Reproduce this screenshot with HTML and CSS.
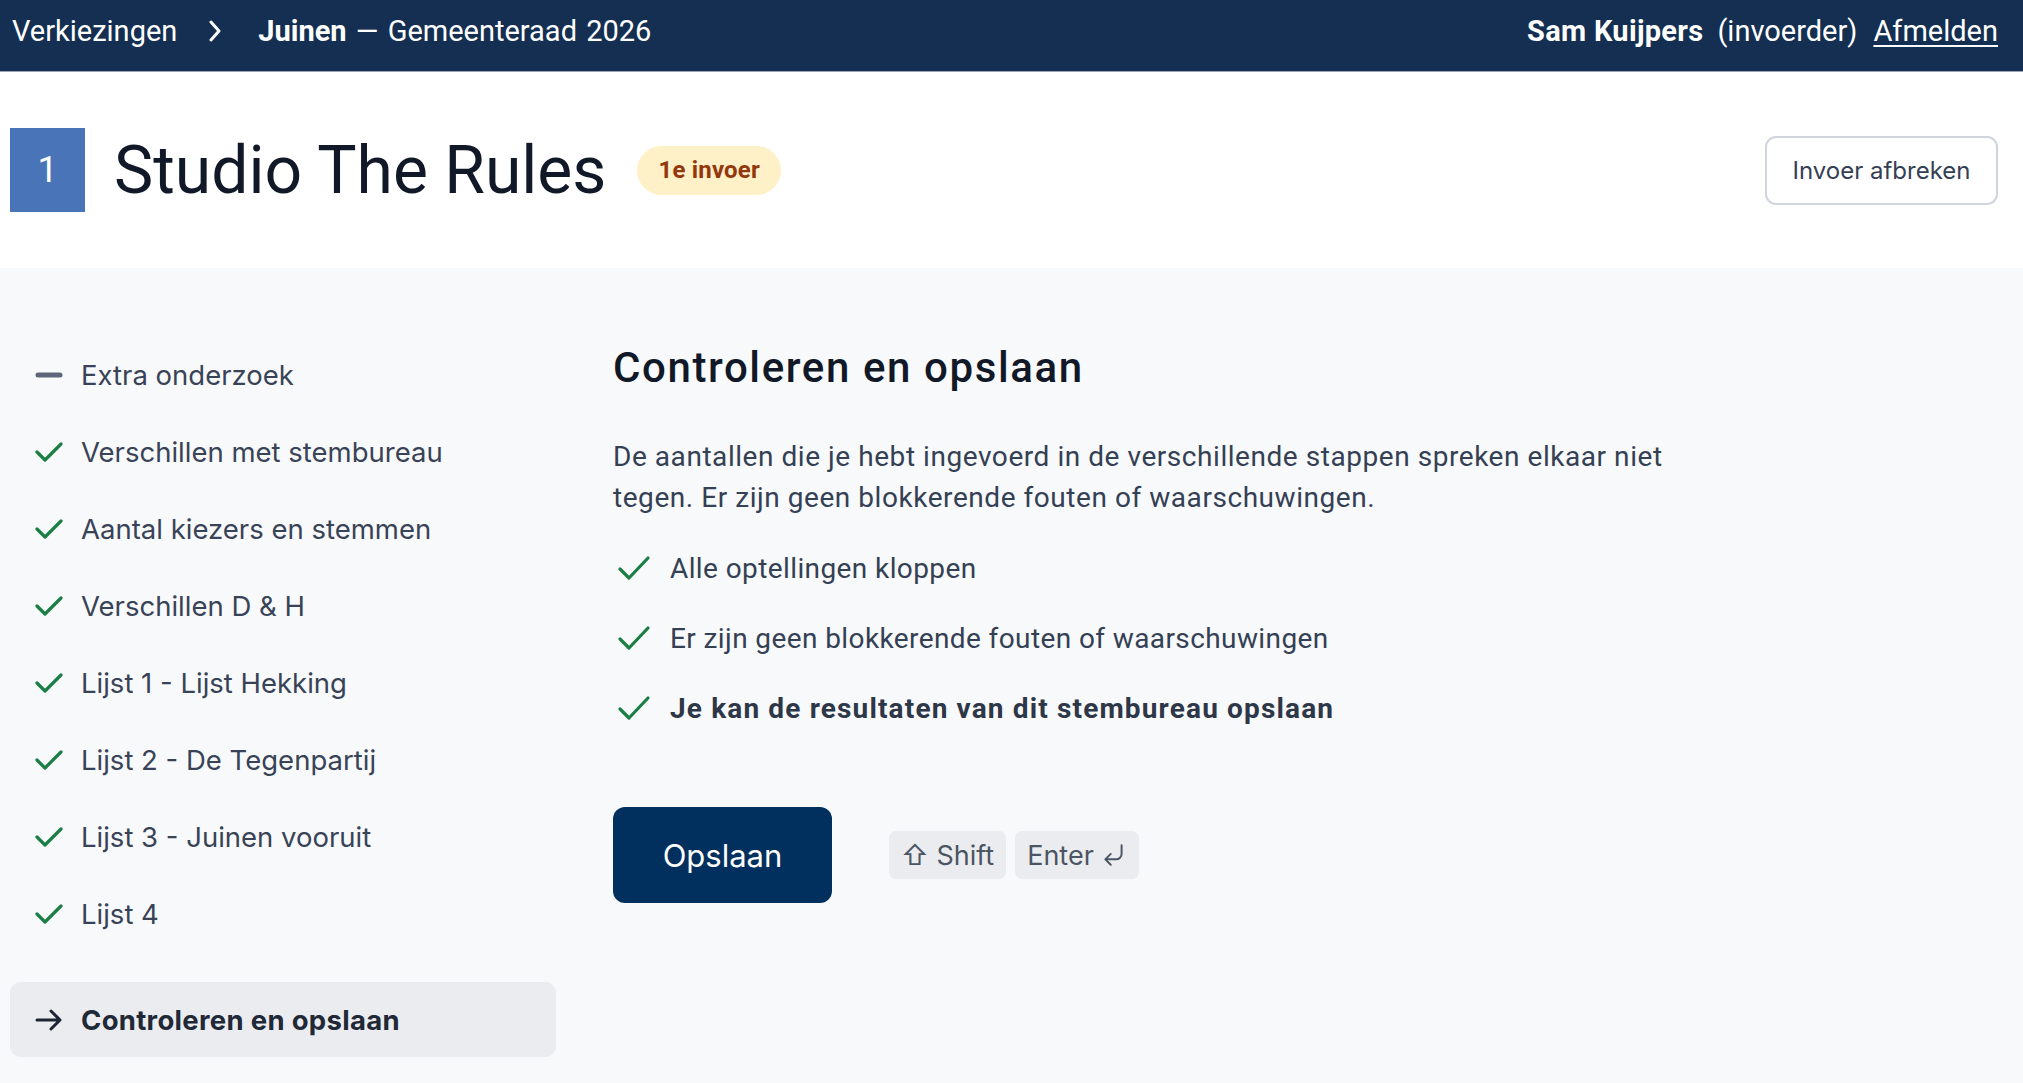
FILE: index.html
```html
<!DOCTYPE html>
<html lang="nl">
<head>
<meta charset="utf-8">
<title>Controleren en opslaan</title>
<link rel="stylesheet" href="styles.css">
</head>
<body>
<header class="topbar">
  <nav class="crumbs">
    <span class="crumb">Verkiezingen</span>
    <svg class="chev" viewBox="0 0 14 22" width="14" height="22"><path d="M3 2 L11 11 L3 20" fill="none" stroke="#fff" stroke-width="3" stroke-linecap="round" stroke-linejoin="round"/></svg>
    <span class="crumb"><strong>Juinen</strong> — Gemeenteraad 2026</span>
  </nav>
  <div class="user">
    <strong>Sam Kuijpers</strong>
    <span class="role">(invoerder)</span>
    <a class="logout" href="#">Afmelden</a>
  </div>
</header>

<section class="pagehead">
  <div class="titlewrap">
    <div class="num">1</div>
    <h1 class="title">Studio The Rules</h1>
    <span class="badge">1e invoer</span>
  </div>
  <button class="btn-outline">Invoer afbreken</button>
</section>

<main class="content">
  <aside class="sidebar">
    <ul class="steps">
      <li class="step"><span class="ico"><svg viewBox="0 0 28 28" width="28" height="28"><path d="M3 14 H25" stroke="#5d667a" stroke-width="5" stroke-linecap="round"/></svg></span>Extra onderzoek</li>
      <li class="step"><span class="ico"><svg viewBox="0 0 28 28" width="28" height="28"><path d="M2 14 L10 22 L26 6" fill="none" stroke="#1b7f45" stroke-width="3.2" stroke-linecap="round" stroke-linejoin="round"/></svg></span>Verschillen met stembureau</li>
      <li class="step"><span class="ico"><svg viewBox="0 0 28 28" width="28" height="28"><path d="M2 14 L10 22 L26 6" fill="none" stroke="#1b7f45" stroke-width="3.2" stroke-linecap="round" stroke-linejoin="round"/></svg></span>Aantal kiezers en stemmen</li>
      <li class="step"><span class="ico"><svg viewBox="0 0 28 28" width="28" height="28"><path d="M2 14 L10 22 L26 6" fill="none" stroke="#1b7f45" stroke-width="3.2" stroke-linecap="round" stroke-linejoin="round"/></svg></span>Verschillen D &amp; H</li>
      <li class="step"><span class="ico"><svg viewBox="0 0 28 28" width="28" height="28"><path d="M2 14 L10 22 L26 6" fill="none" stroke="#1b7f45" stroke-width="3.2" stroke-linecap="round" stroke-linejoin="round"/></svg></span>Lijst 1 - Lijst Hekking</li>
      <li class="step"><span class="ico"><svg viewBox="0 0 28 28" width="28" height="28"><path d="M2 14 L10 22 L26 6" fill="none" stroke="#1b7f45" stroke-width="3.2" stroke-linecap="round" stroke-linejoin="round"/></svg></span>Lijst 2 - De Tegenpartij</li>
      <li class="step"><span class="ico"><svg viewBox="0 0 28 28" width="28" height="28"><path d="M2 14 L10 22 L26 6" fill="none" stroke="#1b7f45" stroke-width="3.2" stroke-linecap="round" stroke-linejoin="round"/></svg></span>Lijst 3 - Juinen vooruit</li>
      <li class="step"><span class="ico"><svg viewBox="0 0 28 28" width="28" height="28"><path d="M2 14 L10 22 L26 6" fill="none" stroke="#1b7f45" stroke-width="3.2" stroke-linecap="round" stroke-linejoin="round"/></svg></span>Lijst 4</li>
    </ul>
    <div class="step active"><span class="ico"><svg viewBox="0 0 28 28" width="28" height="28"><path d="M2 14 H25 M16 5 L25 14 L16 23" fill="none" stroke="#1d2433" stroke-width="3" stroke-linecap="round" stroke-linejoin="round"/></svg></span>Controleren en opslaan</div>
  </aside>

  <article class="main">
    <h2 class="heading">Controleren en opslaan</h2>
    <p class="lead">De aantallen die je hebt ingevoerd in de verschillende stappen spreken elkaar niet tegen. Er zijn geen blokkerende fouten of waarschuwingen.</p>
    <ul class="checks">
      <li class="check"><svg viewBox="0 0 34 28" width="34" height="28"><path d="M3 15 L12 24 L31 4" fill="none" stroke="#1b7f45" stroke-width="3.2" stroke-linecap="round" stroke-linejoin="round"/></svg>Alle optellingen kloppen</li>
      <li class="check"><svg viewBox="0 0 34 28" width="34" height="28"><path d="M3 15 L12 24 L31 4" fill="none" stroke="#1b7f45" stroke-width="3.2" stroke-linecap="round" stroke-linejoin="round"/></svg>Er zijn geen blokkerende fouten of waarschuwingen</li>
      <li class="check strong"><svg viewBox="0 0 34 28" width="34" height="28"><path d="M3 15 L12 24 L31 4" fill="none" stroke="#1b7f45" stroke-width="3.2" stroke-linecap="round" stroke-linejoin="round"/></svg>Je kan de resultaten van dit stembureau opslaan</li>
    </ul>
    <div class="actions">
      <button class="btn-primary">Opslaan</button>
      <div class="keys">
        <kbd class="key">⇧ Shift</kbd>
        <kbd class="key">Enter<svg class="enter" viewBox="0 0 24 24" width="26" height="26"><path d="M19 3 V11 A5 5 0 0 1 14 16 H4 M9 11 L4 16 L9 21" fill="none" stroke="#4b5563" stroke-width="1.8" stroke-linecap="round" stroke-linejoin="round"/></svg></kbd>
      </div>
    </div>
  </article>
</main>
</body>
</html>
```

FILE: styles.css
```css
* { box-sizing: border-box; }
html, body { margin: 0; padding: 0; }
body {
  background: #f8f9fb;
  font-family: Roboto, "Liberation Sans", sans-serif;
  color: #344054;
  min-height: 1083px;
}
ul { list-style: none; margin: 0; padding: 0; }

.topbar {
  height: 72px;
  background: #142f51;
  color: #fff;
  display: flex;
  align-items: center;
  justify-content: space-between;
  padding: 0 25px 10px 12px;
  font-size: 29px;
  border-bottom: 1px solid #9aa6b8;
}
.crumbs { display: flex; align-items: center; }
.crumb { word-spacing: 2px; }
.chev { margin: 0 36px 0 31px; }
.crumb strong { font-weight: 700; }
.user { display: flex; align-items: center; gap: 14px; }
.user strong { font-weight: 700; letter-spacing: 0.3px; }
.logout { color: #fff; text-decoration: underline; text-underline-offset: 4px; text-decoration-thickness: 2px; margin-left: 2px; }

.pagehead {
  height: 196px;
  background: #fff;
  display: flex;
  align-items: center;
  justify-content: space-between;
  padding: 0 25px 0 10px;
}
.titlewrap { display: flex; align-items: center; }
.num {
  width: 75px;
  height: 84px;
  background: #4a74b8;
  color: #fff;
  display: flex;
  align-items: center;
  justify-content: center;
  font-size: 36px;
  font-weight: 400;
}
.title {
  margin: 0 0 0 29px;
  font-size: 66px;
  font-weight: 400;
  color: #111827;
}
.badge {
  margin-left: 31px;
  height: 49px;
  padding: 0 21px;
  border-radius: 25px;
  background: #fef0c7;
  color: #93370d;
  font-weight: 700;
  font-size: 24px;
  letter-spacing: 0.2px;
  display: flex;
  align-items: center;
}
.btn-outline {
  width: 233px;
  height: 69px;
  background: #fff;
  border: 2px solid #d0d5dd;
  border-radius: 11px;
  font-family: Inter, "Noto Sans", sans-serif;
  font-size: 24px;
  color: #344054;
}

.content {
  display: flex;
  padding-left: 10px;
}
.sidebar {
  width: 546px;
  padding-top: 68px;
  font-family: Inter, "Noto Sans", sans-serif;
  font-size: 27.5px;
  color: #384357;
}
.step {
  height: 77px;
  display: flex;
  align-items: center;
  padding-left: 25px;
}
.ico {
  width: 28px;
  height: 28px;
  margin-right: 18px;
  display: flex;
}
.step.active {
  margin-top: 30px;
  height: 75px;
  background: #ebecf0;
  border-radius: 11px;
  font-weight: 700;
  letter-spacing: 0.3px;
  color: #1f2937;
}

.main {
  margin-left: 57px;
  padding-top: 75px;
}
.heading {
  margin: 0;
  font-size: 42px;
  line-height: 50px;
  font-weight: 500;
  letter-spacing: 1.6px;
  color: #111827;
}
.lead {
  margin: 43px 0 0;
  max-width: 1090px;
  font-size: 28px;
  letter-spacing: 0.55px;
  line-height: 41px;
}
.checks {
  margin-top: 30px;
  display: flex;
  flex-direction: column;
  gap: 30px;
}
.check {
  height: 40px;
  display: flex;
  align-items: center;
  font-size: 28px;
  letter-spacing: 0.4px;
}
.check svg { margin: 0 19px 0 4px; }
.check.strong { font-weight: 700; color: #2d3748; letter-spacing: 1.15px; }

.actions {
  margin-top: 79px;
  display: flex;
  align-items: center;
}
.btn-primary {
  width: 219px;
  height: 96px;
  background: #01305e;
  color: #fff;
  border: none;
  border-radius: 12px;
  font-family: Inter, "Noto Sans", sans-serif;
  font-size: 31px;
}
.keys { display: flex; gap: 9px; margin-left: 57px; }
.key {
  height: 48px;
  padding: 0 12px;
  background: #ebecef;
  border-radius: 7px;
  display: flex;
  align-items: center;
  font-family: Inter, "DejaVu Sans", sans-serif;
  font-size: 27px;
  color: #4b5563;
}
.enter { margin-left: 7px; }
```
